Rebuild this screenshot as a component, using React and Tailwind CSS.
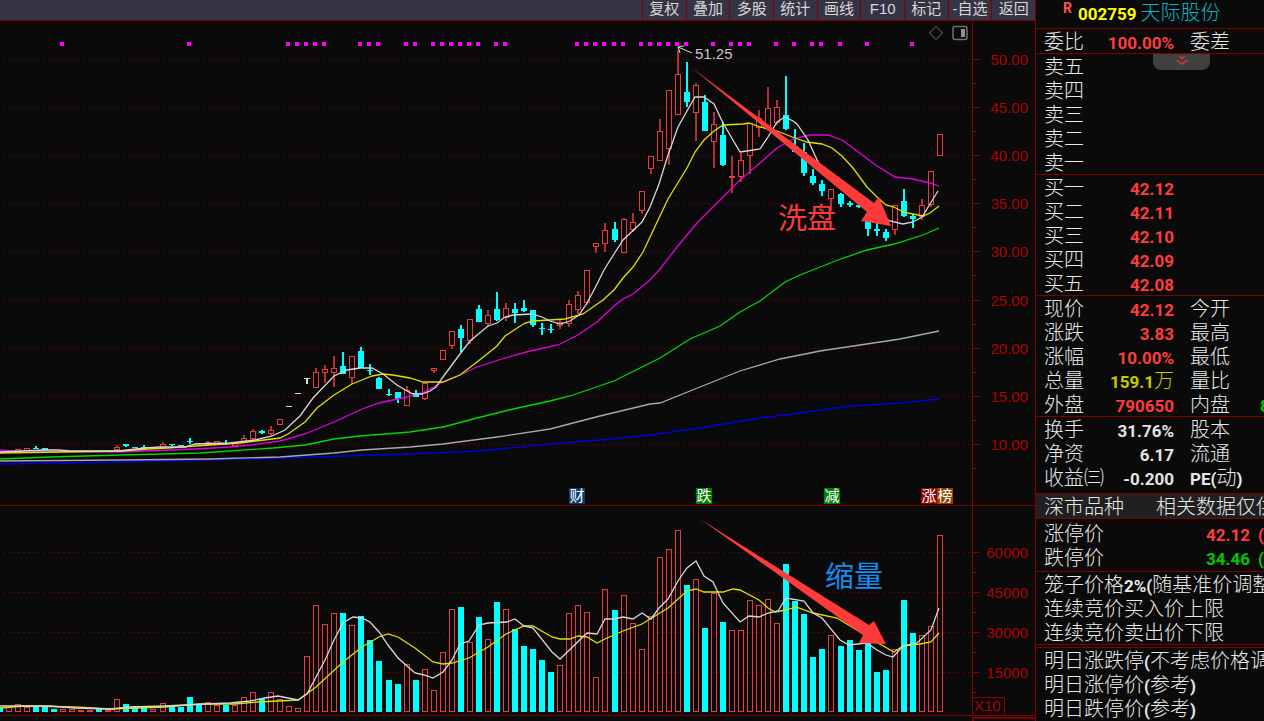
const toolbar = ['复权', '叠加', '多股', '统计', '画线', 'F10', '标记', '-自选', '返回']

const RED = '#e63c3c'
const CYAN = '#00ffff'
const WHITE = '#d8d8d8'

// [index, direction, high, body top, body bottom, low]
const candles = [
  [0, 'd', 452, 452, 453, 453], [2, 'u', 449, 449, 451, 451], [3, 'u', 448, 448, 450, 450],
  [4, 'd', 446, 448, 449, 449], [5, 'd', 448, 448, 450, 450], [13, 'u', 445, 447, 449, 449],
  [14, 'd', 444, 444, 446, 447], [15, 'd', 447, 447, 448, 448], [16, 'd', 445, 447, 448, 450],
  [18, 'u', 442, 444, 447, 447], [19, 'd', 444, 444, 445, 446], [20, 'd', 445, 445, 446, 446],
  [21, 'd', 438, 441, 442, 444], [22, 'd', 443, 443, 444, 444], [23, 'u', 441, 442, 444, 444],
  [24, 'u', 441, 441, 443, 443], [25, 'd', 440, 443, 444, 445], [26, 'u', 443, 443, 445, 446],
  [27, 'u', 435, 438, 442, 442], [28, 'u', 429, 431, 438, 439], [29, 'd', 430, 431, 433, 434],
  [30, 'u', 426, 430, 433, 434], [31, 'u', 419, 419, 424, 424], [32, 'f', 406, 406, 407, 407],
  [33, 'f', 393, 393, 394, 394], [34, 'f', 378, 378, 379, 384], [35, 'u', 368, 372, 387, 387],
  [36, 'u', 365, 369, 372, 382], [37, 'u', 356, 368, 372, 386], [38, 'd', 352, 366, 374, 374],
  [39, 'u', 356, 356, 377, 383], [40, 'd', 347, 351, 368, 368], [41, 'd', 364, 370, 371, 375],
  [42, 'd', 377, 378, 389, 389], [43, 'd', 389, 394, 395, 396], [44, 'd', 392, 392, 399, 403],
  [45, 'u', 386, 390, 405, 405], [46, 'd', 390, 393, 397, 397], [47, 'u', 383, 383, 398, 399],
  [48, 'u', 368, 368, 370, 372], [49, 'u', 350, 350, 359, 359], [50, 'u', 331, 331, 345, 348],
  [51, 'd', 325, 329, 338, 352], [52, 'u', 319, 319, 340, 343], [53, 'd', 305, 309, 322, 322],
  [54, 'u', 310, 315, 323, 326], [55, 'd', 292, 309, 320, 321], [56, 'u', 303, 308, 317, 320],
  [57, 'd', 303, 309, 313, 323], [58, 'd', 300, 308, 311, 312], [59, 'd', 310, 310, 325, 327],
  [60, 'd', 323, 328, 329, 335], [61, 'd', 324, 329, 330, 333], [62, 'u', 320, 322, 325, 328],
  [63, 'u', 300, 304, 323, 326], [64, 'u', 291, 295, 309, 313], [65, 'u', 270, 270, 302, 304],
  [66, 'u', 243, 243, 246, 252], [67, 'u', 223, 230, 243, 251], [68, 'd', 222, 229, 240, 242],
  [69, 'u', 218, 219, 252, 252], [70, 'u', 213, 222, 229, 231], [71, 'u', 191, 191, 210, 213],
  [72, 'u', 156, 156, 168, 173], [73, 'u', 119, 131, 160, 160], [74, 'u', 90, 90, 148, 164],
  [75, 'u', 50, 74, 114, 114], [76, 'd', 62, 92, 102, 107], [77, 'u', 83, 85, 112, 140],
  [78, 'd', 95, 102, 131, 131], [79, 'u', 112, 124, 141, 167], [80, 'd', 122, 135, 165, 166],
  [81, 'u', 156, 176, 177, 192], [82, 'u', 153, 160, 176, 181], [83, 'u', 123, 123, 155, 173],
  [84, 'u', 110, 118, 127, 136], [85, 'u', 87, 108, 127, 130], [86, 'u', 100, 107, 122, 124],
  [87, 'd', 76, 115, 129, 130], [88, 'd', 129, 146, 152, 152], [89, 'd', 143, 152, 173, 176],
  [90, 'd', 169, 176, 183, 185], [91, 'd', 180, 184, 191, 196], [92, 'u', 189, 189, 198, 210],
  [93, 'd', 193, 194, 204, 207], [94, 'd', 201, 203, 205, 207], [95, 'd', 204, 205, 207, 208],
  [96, 'd', 213, 214, 229, 236], [97, 'd', 222, 229, 231, 236], [98, 'd', 229, 232, 238, 241],
  [99, 'u', 205, 205, 229, 234], [100, 'd', 189, 201, 216, 217], [101, 'd', 214, 216, 219, 228],
  [102, 'u', 199, 205, 216, 219], [103, 'u', 171, 171, 204, 206], [104, 'u', 134, 134, 155, 155],
]

// top of each volume bar, one per session
const volumes = [
  708, 707, 704, 707, 707, 707, 709, 709, 709, 710, 710, 709, 710, 699, 704, 706, 706, 709, 703, 705,
  707, 697, 705, 702, 705, 705, 705, 697, 692, 699, 692, 699, 706, 708, 656, 605, 624, 613, 613, 625,
  616, 640, 661, 680, 684, 664, 680, 669, 690, 652, 609, 607, 642, 617, 639, 602, 609, 629, 646, 649,
  660, 672, 665, 613, 605, 612, 677, 589, 610, 595, 623, 649, 616, 557, 549, 530, 585, 579, 628, 593,
  622, 630, 630, 600, 605, 599, 623, 564, 601, 614, 657, 649, 635, 646, 640, 650, 643, 672, 670, 649,
  600, 633, 635, 626, 535,
]

const volumeDown = new Set([
  0, 4, 5, 6, 11, 14, 15, 16, 19, 20, 21, 22, 25, 29, 38, 40, 41, 42, 43, 44, 46, 51, 53, 55, 57, 58,
  59, 60, 61, 68, 76, 78, 80, 87, 88, 89, 90, 91, 93, 94, 95, 96, 97, 98, 100, 101,
])

const marks = [
  7, 21, 32, 33, 34, 35, 36, 40, 41, 42, 45, 46, 48, 49, 50, 51, 52, 53, 55, 56, 64, 65, 66, 67, 68,
  69, 71, 72, 73, 74, 75, 76, 79, 81, 82, 83, 86, 88, 90, 91, 93, 96, 101,
]

const priceLines = [
  {
    color: '#0000e0',
    points: '0,464 120,462 205,460 290,458 313,457 410,454 480,451 550,444 600,440 650,435 700,428 760,418 800,413 850,406 900,403 939,399',
  },
  {
    color: '#a8a8a8',
    points: '0,461 120,460 210,459 280,457 307,455 334,453 362,450 410,447 443,444 497,437 550,429 600,416 650,404 660,403 700,387 740,371 780,359 820,351 860,345 900,339 939,331',
  },
  {
    color: '#00d800',
    points: '0,459 50,457 120,455 200,453 273,448 305,445 334,439 360,436 410,432 443,427 477,418 513,409 550,401 570,396 614,381 640,368 660,358 690,339 720,326 740,312 760,301 785,282 800,275 838,260 867,250 894,244 923,235 939,228',
  },
  {
    color: '#e000e0',
    points: '0,450 14,451 120,452 195,449 230,447 250,445 280,441 305,434 334,422 362,409 379,403 407,397 424,392 443,382 460,375 477,367 505,358 530,351 558,345 578,335 597,322 614,306 623,299 633,294 650,280 660,269 677,247 697,223 727,193 740,180 760,163 777,148 793,139 810,135 828,135 842,140 857,151 877,166 895,177 913,179 930,183 939,186',
  },
  {
    color: '#e0e000',
    points: '0,453 122,451 148,449 168,448 195,446 240,443 280,438 288,434 305,422 317,408 334,395 352,384 362,380 372,376 383,374 393,375 410,378 423,382 443,382 460,375 477,362 497,346 505,336 525,323 533,321 565,319 583,314 603,300 614,290 623,278 633,267 643,252 659,218 668,199 687,168 695,152 704,140 714,131 723,125 743,124 749,123 760,127 777,131 795,138 807,142 822,144 832,148 842,156 853,168 867,187 877,197 886,205 894,207 903,212 913,214 923,216 930,213 939,206',
  },
  {
    color: WHITE,
    points: '0,452 45,450 58,450 70,451 118,451 145,448 160,447 185,447 195,444 230,443 255,440 272,436 285,430 300,416 313,398 334,376 347,370 360,368 372,368 383,374 397,385 407,391 413,394 422,394 430,391 436,387 443,377 460,354 470,341 488,326 497,323 505,317 513,315 532,314 542,317 550,321 560,324 570,321 579,315 587,303 595,288 604,270 614,254 623,240 642,222 650,207 659,184 668,155 678,127 687,111 695,97 704,97 714,104 723,123 740,152 747,151 760,149 768,137 777,122 785,117 793,121 797,124 808,140 818,162 840,188 870,210 890,221 903,224 913,222 922,217 930,204 938,191',
  },
]

const volumeLines = [
  {
    color: '#e0e000',
    points: '0,708 25,706 75,707 110,709 165,707 200,704 235,704 258,702 298,700 316,687 343,662 362,647 379,637 388,634 398,637 415,648 433,662 443,664 452,663 469,658 488,647 506,634 524,626 533,626 552,637 560,639 570,639 578,636 587,637 597,643 605,639 623,631 642,624 668,608 687,591 696,589 704,592 723,592 733,589 740,590 759,600 768,608 775,612 786,610 796,607 813,613 837,618 860,632 878,643 894,652 903,646 920,644 931,642 939,633',
  },
  {
    color: WHITE,
    points: '0,706 50,706 75,708 110,709 130,707 165,706 205,704 230,703 250,701 265,698 278,696 298,700 307,694 316,677 325,660 334,640 343,623 353,617 362,618 370,622 379,632 388,645 398,658 407,666 415,673 424,675 433,678 443,672 452,660 460,644 469,641 479,625 488,623 507,622 515,619 524,626 533,628 552,652 560,659 587,633 597,634 605,619 614,619 623,617 633,619 642,613 651,619 659,608 668,599 678,581 687,568 696,561 704,576 713,582 723,603 740,622 749,616 759,617 768,613 778,611 786,598 804,601 813,613 822,618 840,640 849,645 867,643 877,650 886,655 893,657 903,646 917,643 931,630 939,608',
  },
]

const priceTicks = [50, 45, 40, 35, 30, 25, 20, 15, 10].map((value, i) => ({
  label: value.toFixed(2),
  y: Math.round(59 + i * 48.1),
}))

const volumeTicks = [60000, 45000, 30000, 15000].map((value, i) => ({
  label: String(value),
  y: 552 + i * 40,
}))

const tags = [
  { x: 569, label: '财', fill: '#0c3c6c' },
  { x: 696, label: '跌', fill: '#008000' },
  { x: 824, label: '减', fill: '#008000' },
  { x: 921, label: '涨', fill: '#900000' },
  { x: 937, label: '榜', fill: '#8a4400' },
]

const barLeft = i => Math.round(i * 9.04 - 3.2)

function Candle({ data }) {
  const [i, dir, high, top, bottom, low] = data
  const x = barLeft(i)
  if (dir === 'u') {
    return (
      <g>
        <path d={`M${x + 3} ${high}V${top}M${x + 3} ${bottom + 1}V${low + 1}`} stroke="#b43030" strokeWidth="2" />
        <rect x={x + 0.5} y={top + 0.5} width="5" height={Math.max(bottom - top, 1)} fill="none" stroke={RED} />
      </g>
    )
  }
  const color = dir === 'd' ? CYAN : WHITE
  return (
    <g fill={color}>
      <rect x={x + 2} y={high} width="2" height={low - high} />
      <rect x={x} y={top} width="6" height={bottom - top} />
    </g>
  )
}

function VolumeBar({ index, top }) {
  const x = barLeft(index)
  if (volumeDown.has(index)) {
    return <rect x={x} y={top} width="6" height={712 - top} fill={CYAN} />
  }
  return <rect x={x + 0.5} y={top + 0.5} width="5" height={711 - top} fill="none" stroke={RED} />
}

function Axis({ ticks, minorStep, from, to }) {
  return (
    <g>
      {ticks.map(tick => (
        <g key={tick.label}>
          <path d={`M3 ${tick.y + 0.5}H972`} stroke="#600000" strokeDasharray="2 3" />
          <path d={`M972 ${tick.y + 0.5}h7M972 ${tick.y + minorStep + 0.5}h4`} stroke="#900000" />
          <text x="1028" y={tick.y + 6} textAnchor="end" fontSize="15" fill="#b00000">
            {tick.label}
          </text>
        </g>
      ))}
      <path d={`M972.5 ${from}V${to}`} stroke="#900000" />
    </g>
  )
}

function Lines({ lines }) {
  return lines.map(line => (
    <polyline key={line.color} points={line.points} fill="none" stroke={line.color} strokeWidth="1.3" />
  ))
}

function PriceChart() {
  return (
    <div className="relative border-b border-[#800000]">
      <svg viewBox="0 21 1035 484" className="block w-full">
        <g shapeRendering="crispEdges">
          {marks.map(i => (
            <rect key={i} x={barLeft(i)} y="42" width="4" height="4" fill="#ff00ff" />
          ))}
        </g>
        <Axis ticks={priceTicks} minorStep={24} from={21} to={505} />
        <g shapeRendering="crispEdges">
          {candles.map(data => (
            <Candle key={data[0]} data={data} />
          ))}
        </g>
        <Lines lines={priceLines} />
        <path d="M692 53L678 47M684 46L678 47L680 53" fill="none" stroke={WHITE} />
        <text x="695" y="59" fontSize="15" fill="#c4c4c4">51.25</text>
        {tags.map(tag => (
          <g key={tag.label}>
            <rect x={tag.x} y="488" width="16" height="16" fill={tag.fill} />
            <text x={tag.x + 8} y="501" textAnchor="middle" fontSize="15" fill="#fff">{tag.label}</text>
          </g>
        ))}
        <text x="778" y="229" fontSize="29" fill="#ff3a3a">洗盘</text>
        <path d="M692 68L874 203L879 197L891 226L861 221L867 212Z" fill="#ff3a3a" />
      </svg>
      <div className="absolute top-1 right-[67px] flex gap-2">
        <button type="button" aria-label="标注" className="size-4">
          <svg viewBox="0 0 16 16" className="size-4" fill="none" stroke="#707070">
            <path d="M8 1.5L14.5 8L8 14.5L1.5 8Z" />
          </svg>
        </button>
        <button type="button" aria-label="侧栏" className="size-4">
          <svg viewBox="0 0 16 16" className="size-4" fill="none" stroke="#707070" strokeWidth="1.5">
            <rect x="1" y="1.5" width="14" height="13" rx="2" />
            <rect x="9" y="4" width="4" height="8" fill="#909090" stroke="none" />
          </svg>
        </button>
      </div>
    </div>
  )
}

function VolumeChart() {
  return (
    <div className="border-b border-[#800000]">
      <svg viewBox="0 506 1035 209" className="block w-full">
        <Axis ticks={volumeTicks} minorStep={20} from={506} to={715} />
        <g shapeRendering="crispEdges">
          {volumes.map((top, i) => (
            <VolumeBar key={i} index={i} top={top} />
          ))}
        </g>
        <Lines lines={volumeLines} />
        <path d="M972 697.5H1004.5V715" fill="none" stroke="#900000" />
        <text x="974" y="711" fontSize="15" fill="#b00000">X10</text>
        <text x="825" y="587" fontSize="29" fill="#1090f4">缩量</text>
        <path d="M700 519L869 625L874 621L886 644L859 643L863 635Z" fill="#ff3a3a" />
      </svg>
    </div>
  )
}

const sells = ['卖五', '卖四', '卖三', '卖二', '卖一'].map(label => ({ label }))

const buys = [
  { label: '买一', value: '42.12' },
  { label: '买二', value: '42.11' },
  { label: '买三', value: '42.10' },
  { label: '买四', value: '42.09' },
  { label: '买五', value: '42.08' },
]

const quotes = [
  { label: '现价', value: '42.12', next: '今开' },
  { label: '涨跌', value: '3.83', next: '最高' },
  { label: '涨幅', value: '10.00%', next: '最低' },
  { label: '总量', value: '159.1', unit: '万', next: '量比', color: 'text-[#c8c800]' },
  { label: '外盘', value: '790650', next: '内盘', extra: '8' },
]

const finance = [
  { label: '换手', value: '31.76%', next: '股本', color: 'text-[#e4e4e4]' },
  { label: '净资', value: '6.17', next: '流通', color: 'text-[#e4e4e4]' },
  { label: '收益㈢', value: '-0.200', next: <><Num>PE(</Num>动<Num>)</Num></>, color: 'text-[#e4e4e4]' },
]

function Num({ children, className = '' }) {
  return (
    <span className={`font-[Roboto,sans-serif] text-[17px] leading-none font-bold ${className}`}>
      {children}
    </span>
  )
}

function QuoteTable({ rows, className = '' }) {
  return (
    <div className={`border-t border-[#800000] ${className}`}>
      <table className="w-full table-fixed">
        <tbody>
          {rows.map(row => (
            <tr key={row.label} className="h-6">
              <th scope="row" className="w-[68px] p-0 pl-2 text-left font-light">{row.label}</th>
              <td className={`w-[70px] p-0 text-right ${row.color || 'text-[#ff3c3c]'}`}>
                <Num>{row.value}</Num>
                {row.unit}
              </td>
              <td className="p-0 pl-4">
                {row.next}
                {row.extra && <Num className="ml-[30px] text-[#00c800]">{row.extra}</Num>}
              </td>
            </tr>
          ))}
        </tbody>
      </table>
    </div>
  )
}

function PriceLimit({ label, value, className }) {
  return (
    <div className="flex items-baseline">
      <span>{label}</span>
      <Num className={`w-[150px] text-right ${className}`}>{value}</Num>
      <Num className={`ml-2 ${className}`}>(</Num>
    </div>
  )
}

function QuotePanel() {
  return (
    <aside className="w-[229px] shrink-0 overflow-hidden border-l border-[#800000] font-['Noto_Sans_CJK_SC',sans-serif] text-xl leading-6 font-light whitespace-nowrap text-[#e8e8e8]">
      <header className="flex h-7 items-baseline pl-[27px]">
        <span className="self-start font-[Roboto,sans-serif] text-sm leading-4 font-bold text-[#ff5050]">R</span>
        <Num className="ml-1.5 text-[#ffff00]">002759</Num>
        <h1 className="ml-1 text-[#00b8c8]">天际股份</h1>
      </header>
      <QuoteTable rows={[{ label: '委比', value: '100.00%', next: '委差' }]} />
      <div className="relative">
        <QuoteTable rows={sells} />
        <button
          type="button"
          aria-label="展开"
          className="absolute top-px left-[117px] flex h-4 w-[57px] justify-center rounded-b-lg bg-[#404040] text-[#d83838]"
        >
          <svg viewBox="0 0 16 16" className="size-4" fill="none" stroke="currentColor" strokeWidth="1.5">
            <path d="M5.5 2.5L8 4.5L10.5 2.5M2.5 6L8 10L13.5 6" />
          </svg>
        </button>
      </div>
      <QuoteTable rows={buys} />
      <QuoteTable rows={quotes} />
      <QuoteTable rows={finance} className="pb-1" />
      <div className="flex gap-8 border-t border-[#800000] bg-[#202020] pl-2">
        <span>深市品种</span>
        <span>相关数据仅供参考</span>
      </div>
      <div className="border-t border-[#800000] py-[2px] pl-2">
        <PriceLimit label="涨停价" value="42.12" className="text-[#ff3c3c]" />
        <PriceLimit label="跌停价" value="34.46" className="text-[#00c800]" />
      </div>
      <div className="border-t border-[#800000] pl-2">
        <p>笼子价格<Num>2%(</Num>随基准价调整<Num>)</Num></p>
        <p>连续竞价买入价上限</p>
        <p>连续竞价卖出价下限</p>
      </div>
      <div className="h-1 border-y border-[#800000]" />
      <div className="pl-2">
        <p>明日涨跌停<Num>(</Num>不考虑价格调整<Num>)</Num></p>
        <p>明日涨停价<Num>(</Num>参考<Num>)</Num></p>
        <p>明日跌停价<Num>(</Num>参考<Num>)</Num></p>
      </div>
    </aside>
  )
}

export default function App() {
  return (
    <div className="flex min-h-screen bg-[#0a0a0a] font-['Liberation_Sans','Noto_Sans_CJK_SC',sans-serif]">
      <main className="flex min-w-0 flex-1 flex-col">
        <nav className="flex h-[21px] justify-end border-b border-[#800000] bg-[#343444]">
          <div className="flex w-[393px]">
            {toolbar.map(label => (
              <button
                key={label}
                type="button"
                className="flex-1 border-l border-[#800000] pb-[2px] text-[15px] leading-[18px] whitespace-nowrap text-[#d8d8d8]"
              >
                {label}
              </button>
            ))}
          </div>
        </nav>
        <PriceChart />
        <VolumeChart />
        <div className="mt-px w-[63px] flex-1 self-end border-t-2 border-l-2 border-[#800000]" />
      </main>
      <QuotePanel />
    </div>
  )
}
